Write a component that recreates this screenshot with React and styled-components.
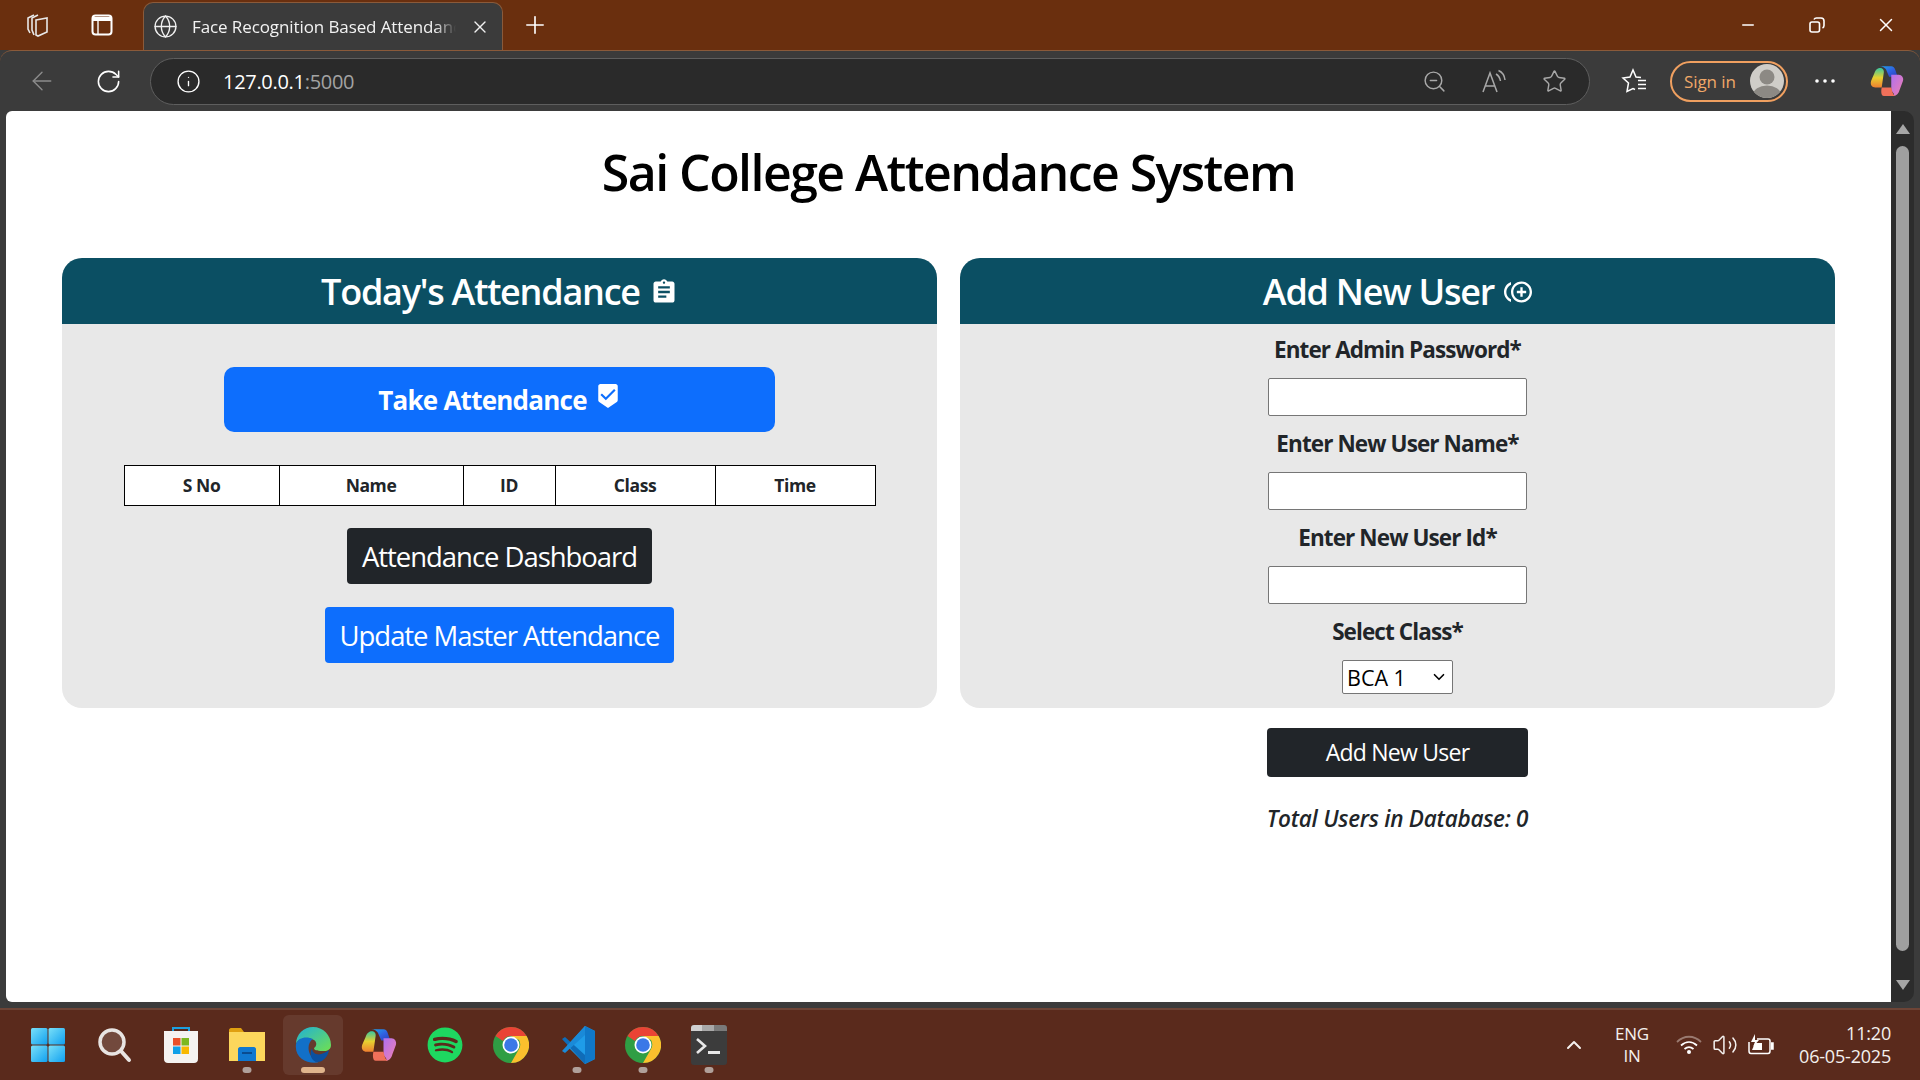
import styled, { createGlobalStyle } from 'styled-components';
import { MdAssignment, MdBeenhere, MdControlPointDuplicate } from 'react-icons/md';
import { FaSpotify } from 'react-icons/fa';
import {
  ArrowLeft, RotateCw, Info, ZoomOut, Star, Globe, X, Plus, Minus, ChevronUp, ChevronDown, Volume2,
} from 'lucide-react';

const GlobalStyle = createGlobalStyle`
  html, body { margin: 0; padding: 0; height: 100%; overflow: hidden; }
  body { font-family: "Open Sans", "Noto Sans", sans-serif; }
  * { box-sizing: border-box; }
`;

const Screen = styled.div`
  width: 1920px;
  height: 1080px;
  display: flex;
  flex-direction: column;
  background: #3b3b3b;
`;

/* browser chrome */
const TabStrip = styled.div`
  height: 50px;
  flex: none;
  background: #6a2f0e;
  display: flex;
  align-items: flex-end;
  color: #fff;
`;
const StripIcon = styled.div`
  width: 64px;
  height: 50px;
  display: flex;
  align-items: center;
  justify-content: center;
  flex: none;
  margin-left: ${(p) => p.$ml || 0}px;
`;
const Tab = styled.div`
  width: 360px;
  height: 48px;
  margin-left: 9px;
  background: #3b3b3b;
  border: 1px solid #8a5a3a;
  border-bottom: none;
  border-radius: 10px 10px 0 0;
  display: flex;
  align-items: center;
  padding: 0 12px 0 9px;
  gap: 14px;
  flex: none;
`;
const TabTitle = styled.span`
  flex: 1;
  font-family: "Open Sans", sans-serif;
  font-size: 17px;
  letter-spacing: -0.1px;
  white-space: nowrap;
  overflow: hidden;
  color: #f2f2f2;
  mask-image: linear-gradient(to right, #000 92%, transparent 100%);
`;
const StripSpacer = styled.div`
  flex: 1;
`;
const WindowButton = styled.div`
  width: 69px;
  height: 50px;
  display: flex;
  align-items: center;
  justify-content: center;
  flex: none;
`;
const Toolbar = styled.div`
  height: 61px;
  flex: none;
  background: #3b3b3b;
  border-top: 1px solid #8a5a3a;
  border-radius: 12px 12px 0 0;
  display: flex;
  align-items: center;
  padding-left: 18px;
  color: #fff;
`;
const NavButton = styled.div`
  width: ${(p) => p.$w || 48}px;
  height: 46px;
  display: flex;
  align-items: center;
  justify-content: center;
  flex: none;
  margin-left: ${(p) => p.$ml || 0}px;
`;
const AddressBar = styled.div`
  width: 1440px;
  height: 47px;
  margin-left: 18px;
  flex: none;
  background: #2a2a2a;
  border: 1px solid #5e5e5e;
  border-radius: 24px;
  display: flex;
  align-items: center;
  padding: 0 5px 0 25px;
`;
const Url = styled.div`
  flex: 1;
  margin-left: 22px;
  font-family: "Open Sans", sans-serif;
  font-size: 20px;
  letter-spacing: -0.3px;
  color: #fff;
  span { color: #a3a3a3; }
`;
const AddressIcon = styled.div`
  width: 60px;
  display: flex;
  justify-content: center;
  color: #a8a8a8;
`;
const SignIn = styled.div`
  width: 118px;
  height: 41px;
  margin-left: 14px;
  border: 2px solid #f0a060;
  border-radius: 21px;
  display: flex;
  align-items: center;
  justify-content: space-between;
  padding: 0 2px 0 12px;
  color: #f0a868;
  font-family: "Open Sans", sans-serif;
  font-size: 17px;
  letter-spacing: -0.1px;
  flex: none;
`;
const Avatar = styled.div`
  width: 34px;
  height: 34px;
  border-radius: 50%;
  overflow: hidden;
  flex: none;
`;

/* page area */
const Viewport = styled.div`
  flex: 1;
  min-height: 0;
  display: flex;
  padding: 0 0 6px 6px;
  background: #3b3b3b;
`;
const Page = styled.main`
  flex: 1;
  min-width: 0;
  background: #fff;
  border-radius: 6px 0 0 6px;
  font-family: "Open Sans", "Noto Sans", sans-serif;
  color: #212529;
`;
const Scrollbar = styled.div`
  width: 23px;
  flex: none;
  background: #2c2c2c;
  border-radius: 0 10px 10px 0;
  margin-right: 6px;
  display: flex;
  flex-direction: column;
  align-items: center;
  padding: 6px 0 5px;
`;
const ScrollArrow = styled.div`
  height: 24px;
  flex: none;
  display: flex;
  align-items: center;
  color: #a6a6a6;
`;
const ScrollThumb = styled.div`
  flex: 1;
  width: 13px;
  margin: 5px 0 22px;
  background: #9f9f9f;
  border-radius: 7px;
`;
const Title = styled.h1`
  margin: 0;
  padding-top: 31px;
  height: 147px;
  text-align: center;
  font-size: 50px;
  font-weight: 600;
  line-height: 1.2;
  letter-spacing: -1.55px;
  color: #000;
`;
const Columns = styled.div`
  display: flex;
  gap: 23px;
  padding: 0 56px;
  align-items: flex-start;
`;
const Column = styled.section`
  width: 875px;
  flex: none;
  display: flex;
  flex-direction: column;
  align-items: center;
`;
const Panel = styled.div`
  width: 100%;
  height: 450px;
  background: #e8e8e8;
  border-radius: 20px;
  overflow: hidden;
  display: flex;
  flex-direction: column;
  align-items: center;
`;
const PanelHead = styled.h2`
  width: 100%;
  height: 66px;
  flex: none;
  margin: 0;
  background: #0b4f63;
  color: #fff;
  font-size: 36px;
  font-weight: 600;
  letter-spacing: -1.25px;
  line-height: 68px;
  text-align: center;
  svg { vertical-align: -1px; margin-left: 2px; }
`;
const TakeButton = styled.button`
  width: 551px;
  height: 65px;
  margin-top: 43px;
  border: none;
  border-radius: 10px;
  background: #0d6efd;
  color: #fff;
  font-family: inherit;
  font-size: 26px;
  font-weight: 700;
  letter-spacing: -0.75px;
  svg { vertical-align: 1px; margin-left: 2px; }
`;
const AttendanceTable = styled.table`
  width: 751px;
  height: 41px;
  margin-top: 33px;
  border-collapse: collapse;
  background: #fff;
  table-layout: fixed;
  border: 1.5px solid #000;
  th {
    border: 1px solid #000;
    padding: 0 0 2px;
    font-size: 17.5px;
    font-weight: 700;
    letter-spacing: -0.4px;
    color: #212529;
  }
`;
const PlainButton = styled.button`
  height: 56px;
  padding: 0 ${(p) => p.$pad}px;
  margin-top: ${(p) => p.$top}px;
  border: none;
  border-radius: 4px;
  background: ${(p) => p.$bg};
  color: #fff;
  font-family: inherit;
  font-size: 27.5px;
  font-weight: 400;
  letter-spacing: -1.05px;
  white-space: nowrap;
`;
const FieldLabel = styled.label`
  display: block;
  height: 26px;
  margin-top: ${(p) => p.$top}px;
  font-size: 22.5px;
  font-weight: 700;
  line-height: 26px;
  letter-spacing: -0.9px;
  color: #212529;
`;
const TextInput = styled.input`
  width: 259px;
  height: 38px;
  margin-top: 15px;
  border: 1px solid #767676;
  border-radius: 2px;
  background: #fff;
  display: block;
`;
const SelectWrap = styled.div`
  position: relative;
  width: 111px;
  height: 34px;
  margin-top: 15px;
  svg {
    position: absolute;
    right: 5px;
    top: 8px;
    pointer-events: none;
    color: #000;
  }
`;
const ClassSelect = styled.select`
  appearance: none;
  width: 100%;
  height: 100%;
  padding: 0 0 0 4px;
  border: 1px solid #767676;
  border-radius: 2px;
  background: #fff;
  font-family: "Open Sans", sans-serif;
  font-size: 21.5px;
  letter-spacing: 0;
  color: #000;
`;
const AddButton = styled.button`
  width: 261px;
  height: 49px;
  margin-top: 20px;
  padding-bottom: 2px;
  border: none;
  border-radius: 4px;
  background: #212529;
  color: #fff;
  font-family: inherit;
  font-size: 23px;
  letter-spacing: -0.75px;
`;
const TotalUsers = styled.p`
  margin: 26px 0 0;
  font-size: 22.5px;
  font-style: italic;
  font-weight: 600;
  line-height: 32px;
  letter-spacing: -0.25px;
  color: #212529;
`;

/* taskbar */
const Taskbar = styled.footer`
  height: 72px;
  flex: none;
  background: #5a2a1c;
  border-top: 2px solid #6e4436;
  display: flex;
  align-items: center;
  padding-left: 15px;
  color: #fff;
`;
const TaskItem = styled.div`
  position: relative;
  width: 66px;
  height: 60px;
  flex: none;
  display: flex;
  align-items: center;
  justify-content: center;
  border-radius: 6px;
  ${(p) => p.$active && 'background: rgba(255,255,255,0.08); width: 60px; margin: 0 3px;'}
  ${(p) => p.$first && 'margin-right: 1px;'}
`;
const RunDot = styled.span`
  position: absolute;
  left: 50%;
  bottom: 2px;
  width: ${(p) => (p.$active ? 24 : 9)}px;
  height: 6px;
  transform: translateX(-50%);
  border-radius: 3px;
  background: ${(p) => (p.$active ? '#e0b48c' : '#b0a09a')};
`;
const Tray = styled.div`
  margin-left: auto;
  display: flex;
  align-items: center;
  padding-right: 29px;
  font-family: "Open Sans", sans-serif;
  font-size: 17px;
  letter-spacing: -0.2px;
  color: #f4f0ee;
`;
const Lang = styled.div`
  width: 60px;
  margin-left: 16px;
  text-align: center;
  line-height: 22px;
`;
const TrayIcon = styled.div`
  width: 36px;
  display: flex;
  justify-content: center;
  margin-left: ${(p) => p.$ml || 0}px;
`;
const Clock = styled.div`
  width: 112px;
  text-align: right;
  font-size: 18px;
  line-height: 23px;
`;

/* logos and icons that the packages don't have */
const CollectionsIcon = () => (
  <svg width="26" height="26" viewBox="0 0 26 26" fill="none" stroke="#e8e8e8" strokeWidth="1.6">
    <path d="M9 3 L3 6 V17 L5 21" />
    <path d="M13 3 L7 6 V18 L9 23" />
    <path d="M11 8 L22 6 V20 L13 24 L11 23 Z" />
  </svg>
);
const TabsIcon = () => (
  <svg width="22" height="22" viewBox="0 0 22 22" fill="none" stroke="#fff" strokeWidth="2">
    <rect x="1.5" y="1.5" width="19" height="19" rx="3" />
    <path d="M2 3 H20 V7 H2 Z" fill="#fff" stroke="none" />
    <path d="M7 7 V20" strokeWidth="1.4" />
  </svg>
);
const RestoreIcon = () => (
  <svg width="16" height="16" viewBox="0 0 16 16" fill="none" stroke="#fff" strokeWidth="1.6">
    <rect x="1" y="5" width="9.5" height="10" rx="2" />
    <path d="M5 2.5 C5.5 1.4 6.5 1 7.5 1 H12 C13.8 1 15 2.2 15 4 V8.5 C15 9.6 14.5 10.5 13.5 11" />
  </svg>
);
const ReadAloudIcon = () => (
  <svg width="26" height="24" viewBox="0 0 26 24" fill="none" stroke="#a8a8a8" strokeWidth="1.5">
    <path d="M2 23 L9 4 L16 23 M4.5 17 H13.5" />
    <path d="M15 5 C17.5 6.5 19 9 19.5 12" />
    <path d="M17.5 1.5 C21 3 23.5 6.5 24 11" />
  </svg>
);
const FavoritesIcon = () => (
  <svg width="26" height="26" viewBox="0 0 26 26" fill="none" stroke="#fff" strokeWidth="1.5">
    <path d="M20 9.5 L15 9 L12 2 L9 9 L2 10 L7.5 15 L6 23.5 L12 20.5 L14 21.5" />
    <path d="M17 12.5 H25 M17 16.5 H25 M17 20.5 H25" />
  </svg>
);
const AvatarIcon = () => (
  <svg width="34" height="34" viewBox="0 0 34 34">
    <rect width="34" height="34" fill="#cfcdc8" />
    <circle cx="17" cy="13" r="7.5" fill="#8c8984" />
    <ellipse cx="17" cy="31" rx="14" ry="9.5" fill="#8c8984" />
  </svg>
);
const CopilotIcon = ({ size = 34, id }) => (
  <svg width={size} height={size} viewBox="0 0 32 32">
    <defs>
      <linearGradient id={`${id}a`} x1="0" y1="0" x2="1" y2="1">
        <stop offset="0" stopColor="#1fa8f0" />
        <stop offset="0.55" stopColor="#2f5fe0" />
        <stop offset="1" stopColor="#2a3fb8" />
      </linearGradient>
      <linearGradient id={`${id}b`} x1="0" y1="0" x2="0" y2="1">
        <stop offset="0" stopColor="#38c8a0" />
        <stop offset="0.5" stopColor="#e8d030" />
        <stop offset="1" stopColor="#f08030" />
      </linearGradient>
      <linearGradient id={`${id}c`} x1="0" y1="0" x2="1" y2="1">
        <stop offset="0" stopColor="#b070f0" />
        <stop offset="1" stopColor="#f080b0" />
      </linearGradient>
    </defs>
    <path d="M9 2 H20 C22 2 23 3 24 6 L26 12 H18 L15 5 C14 3.5 12 2 9 2 Z" fill={`url(#${id}a)`} />
    <path d="M8 4 C11 3 13.5 5 13 8 L11 22 H5 C2 22 0 20 1 16 L4 9 C5 6 6 5 8 4 Z" fill={`url(#${id}b)`} />
    <path d="M20 10 H27 C30 10 32 13 31 16 L28 24 C27 28 25 30 22 30 C24 28 20.5 27 20 24 Z" fill={`url(#${id}c)`} />
    <path d="M11 22 H20 L21 26 C21.5 28 23 30 24 30 H13 C11 30 10 27 11 22 Z" fill="#f0705a" />
  </svg>
);
const WindowsLogo = () => (
  <svg width="36" height="36" viewBox="0 0 36 36">
    <defs>
      <linearGradient id="win" x1="0" y1="0" x2="1" y2="1">
        <stop offset="0" stopColor="#7ae0f8" />
        <stop offset="1" stopColor="#10a0f0" />
      </linearGradient>
    </defs>
    <rect x="1" y="1" width="16.5" height="16.5" rx="1.5" fill="url(#win)" />
    <rect x="18.5" y="1" width="16.5" height="16.5" rx="1.5" fill="url(#win)" />
    <rect x="1" y="18.5" width="16.5" height="16.5" rx="1.5" fill="url(#win)" />
    <rect x="18.5" y="18.5" width="16.5" height="16.5" rx="1.5" fill="url(#win)" />
  </svg>
);
const SearchLogo = () => (
  <svg width="36" height="36" viewBox="0 0 36 36" fill="none">
    <circle cx="15" cy="15" r="12" fill="rgba(255,255,255,0.15)" stroke="#e8e4e2" strokeWidth="3.5" />
    <path d="M24 24 L32 33" stroke="#e8e4e2" strokeWidth="4" strokeLinecap="round" />
  </svg>
);
const StoreLogo = () => (
  <svg width="36" height="38" viewBox="0 0 36 38">
    <path d="M10 6 V2 H26 V6" fill="none" stroke="#1ba0e0" strokeWidth="2" />
    <path d="M1 5 H35 V33 C35 35.5 33.5 37 31 37 H5 C2.5 37 1 35.5 1 33 Z" fill="#f5f3f1" />
    <rect x="10" y="12" width="7.5" height="7.5" fill="#e8502a" />
    <rect x="18.5" y="12" width="7.5" height="7.5" fill="#7cb820" />
    <rect x="10" y="20.5" width="7.5" height="7.5" fill="#10a0e8" />
    <rect x="18.5" y="20.5" width="7.5" height="7.5" fill="#f8b800" />
  </svg>
);
const FolderLogo = () => (
  <svg width="36" height="34" viewBox="0 0 36 34">
    <path d="M0 2 C0 1 1 0 2 0 H12 L15 4 H0 Z" fill="#e0a010" />
    <path d="M0 4 H36 V33 H0 Z" fill="#fcd75c" />
    <path d="M9 21 C9 20 10 19 11 19 H25 C26 19 27 20 27 21 V33 H9 Z" fill="#1078d0" />
    <rect x="13" y="24" width="10" height="2" fill="#0a4c90" />
  </svg>
);
const EdgeLogo = () => (
  <svg width="36" height="36" viewBox="0 0 36 36">
    <defs>
      <linearGradient id="edgeTop" x1="0" y1="0" x2="1" y2="1">
        <stop offset="0" stopColor="#1fb0d8" />
        <stop offset="1" stopColor="#70e050" />
      </linearGradient>
    </defs>
    <path d="M1 17 C1 7 9 0 18 0 C28 0 36 8 36 18 C36 22 33 24 29 24 C24 24 19 24 19 21 C22 19 22 15 19 13 C13 9 3 11 1 17 Z" fill="url(#edgeTop)" />
    <path d="M1 17 C3 10 12 9 18 12 C13 15 12 23 16 29 C18 33 22 36 25 35 C14 38 -1 32 1 17 Z" fill="#1270c8" />
    <path d="M17 21 C17 27 23 29 29 26 C31 25 33 24 34 23 C33 30 27 36 21 35 C16 33 14 26 17 21 Z" fill="#0b50a0" />
  </svg>
);
const ChromeLogo = () => (
  <svg width="36" height="36" viewBox="0 0 36 36">
    <circle cx="18" cy="18" r="18" fill="#2f9e44" />
    <path d="M18 0 A18 18 0 0 1 33.6 9 L18 9 A9 9 0 0 0 10 14 L2.5 9 A18 18 0 0 1 18 0 Z" fill="#ea4335" />
    <path d="M33.6 9 A18 18 0 0 1 18 36 L26 22 A9 9 0 0 0 26 13 L18 9 Z" fill="#fbc02d" />
    <circle cx="18" cy="18" r="8.5" fill="#fff" />
    <circle cx="18" cy="18" r="6.8" fill="#3b78e7" />
  </svg>
);
const VsCodeLogo = () => (
  <svg width="36" height="38" viewBox="0 0 36 38">
    <path d="M26 0 L36 5 V33 L26 38 L8 20 Z" fill="#1f9ce8" />
    <path d="M26 0 V38 L36 33 V5 Z" fill="#1078c8" />
    <path d="M3 13 L6 11 L26 29 V38 Z" fill="#0f6cb8" />
    <path d="M3 25 L6 27 L26 9 V0 Z" fill="#1a8ad8" />
  </svg>
);
const TerminalLogo = () => (
  <svg width="36" height="40" viewBox="0 0 36 40" fill="none">
    <rect x="0" y="0" width="36" height="40" rx="3" fill="#3c3c3c" />
    <path d="M0 3 C0 1 1 0 3 0 H11 V6 H0 Z" fill="#d0d0d0" />
    <rect x="11" y="0" width="12" height="6" fill="#a8a8a8" />
    <path d="M23 0 H33 C35 0 36 1 36 3 V6 H23 Z" fill="#7a7a7a" />
    <path d="M6 14 L14 21 L6 28" stroke="#e8e8e8" strokeWidth="2.6" />
    <rect x="17" y="26" width="12" height="3" fill="#e8e8e8" />
  </svg>
);
const WifiIcon = () => (
  <svg width="26" height="20" viewBox="0 0 26 20" fill="none" strokeWidth="1.8">
    <path d="M1 7 C8 0 18 0 25 7" stroke="#9a7a70" />
    <path d="M5 10.5 C10 6 16 6 21 10.5" stroke="#fff" />
    <path d="M8.5 14 C11.5 11.5 14.5 11.5 17.5 14" stroke="#fff" />
    <circle cx="13" cy="17" r="2" fill="#fff" stroke="none" />
  </svg>
);
const BatteryIcon = () => (
  <svg width="26" height="22" viewBox="0 0 26 22" fill="none" stroke="#fff" strokeWidth="1.5">
    <path d="M9 5 H20 C21.5 5 22 6 22 7 V17 C22 18.5 21.5 19.5 20 19.5 H3 C2 19.5 1 18.5 1 17 V8" />
    <path d="M23 9 H25 V15 H23" fill="#fff" />
    <path d="M7 9 H14 V16 H4 Z" fill="#fff" stroke="none" />
    <path d="M7 0 L3 8 H7 L5 13 L11 6 H7 Z" fill="#fff" stroke="none" />
  </svg>
);

const tableCols = [
  { label: 'S No', width: 155 },
  { label: 'Name', width: 184 },
  { label: 'ID', width: 92 },
  { label: 'Class', width: 160 },
  { label: 'Time', width: 160 },
];

const fields = [
  { label: 'Enter Admin Password*', top: 13 },
  { label: 'Enter New User Name*', top: 15 },
  { label: 'Enter New User Id*', top: 15 },
];

const taskItems = [
  { key: 'start', icon: <WindowsLogo />, first: true },
  { key: 'search', icon: <SearchLogo /> },
  { key: 'store', icon: <StoreLogo /> },
  { key: 'files', icon: <FolderLogo />, running: true },
  { key: 'edge', icon: <EdgeLogo />, active: true },
  { key: 'copilot', icon: <CopilotIcon size={36} id="cpb" /> },
  { key: 'spotify', icon: <FaSpotify size={36} color="#1ed760" /> },
  { key: 'chrome', icon: <ChromeLogo /> },
  { key: 'code', icon: <VsCodeLogo />, running: true },
  { key: 'chrome2', icon: <ChromeLogo />, running: true },
  { key: 'terminal', icon: <TerminalLogo />, running: true },
];

export default function App() {
  return (
    <Screen>
      <GlobalStyle />
      <TabStrip>
        <StripIcon $ml={6}><CollectionsIcon /></StripIcon>
        <StripIcon><TabsIcon /></StripIcon>
        <Tab>
          <Globe size={25} strokeWidth={1.3} color="#f0f0f0" />
          <TabTitle>Face Recognition Based Attendance System</TabTitle>
          <X size={20} strokeWidth={1.6} color="#f0f0f0" />
        </Tab>
        <StripIcon><Plus size={28} strokeWidth={1.4} /></StripIcon>
        <StripSpacer />
        <WindowButton><Minus size={18} strokeWidth={2} /></WindowButton>
        <WindowButton><RestoreIcon /></WindowButton>
        <WindowButton><X size={22} strokeWidth={1.6} /></WindowButton>
      </TabStrip>
      <Toolbar>
        <NavButton><ArrowLeft size={30} strokeWidth={1.1} color="#8c8c8c" /></NavButton>
        <NavButton $ml={18}><RotateCw size={27} strokeWidth={1.4} /></NavButton>
        <AddressBar>
          <Info size={25} strokeWidth={1.3} />
          <Url>127.0.0.1<span>:5000</span></Url>
          <AddressIcon><ZoomOut size={25} strokeWidth={1.4} /></AddressIcon>
          <AddressIcon><ReadAloudIcon /></AddressIcon>
          <AddressIcon><Star size={25} strokeWidth={1.4} /></AddressIcon>
        </AddressBar>
        <NavButton $w={44} $ml={22}><FavoritesIcon /></NavButton>
        <SignIn>Sign in<Avatar><AvatarIcon /></Avatar></SignIn>
        <NavButton $w={50} $ml={12}>
          <svg width="20" height="4" viewBox="0 0 20 4" fill="#fff">
            <circle cx="2" cy="2" r="1.8" /><circle cx="10" cy="2" r="1.8" /><circle cx="18" cy="2" r="1.8" />
          </svg>
        </NavButton>
        <NavButton $w={36} $ml={19}><CopilotIcon id="cpa" /></NavButton>
      </Toolbar>

      <Viewport>
        <Page>
          <Title>Sai College Attendance System</Title>
          <Columns>
            <Column>
              <Panel>
                <PanelHead>Today's Attendance <MdAssignment size={28} /></PanelHead>
                <TakeButton>Take Attendance <MdBeenhere size={26} /></TakeButton>
                <AttendanceTable>
                  <colgroup>
                    {tableCols.map((c) => <col key={c.label} style={{ width: c.width }} />)}
                  </colgroup>
                  <thead>
                    <tr>{tableCols.map((c) => <th key={c.label}>{c.label}</th>)}</tr>
                  </thead>
                </AttendanceTable>
                <PlainButton $bg="#212529" $pad={15} $top={22}>Attendance Dashboard</PlainButton>
                <PlainButton $bg="#0d6efd" $pad={15} $top={23}>Update Master Attendance</PlainButton>
              </Panel>
            </Column>
            <Column>
              <Panel>
                <PanelHead>Add New User <MdControlPointDuplicate size={28} /></PanelHead>
                {fields.map((f) => (
                  <div key={f.label} style={{ display: 'contents' }}>
                    <FieldLabel $top={f.top}>{f.label}</FieldLabel>
                    <TextInput type="text" />
                  </div>
                ))}
                <FieldLabel $top={15}>Select Class*</FieldLabel>
                <SelectWrap>
                  <ClassSelect defaultValue="BCA 1"><option>BCA 1</option></ClassSelect>
                  <ChevronDown size={18} strokeWidth={2.2} />
                </SelectWrap>
              </Panel>
              <AddButton>Add New User</AddButton>
              <TotalUsers>Total Users in Database: 0</TotalUsers>
            </Column>
          </Columns>
        </Page>
        <Scrollbar>
          <ScrollArrow><svg width="16" height="12" viewBox="0 0 16 12" fill="currentColor"><path d="M8 1 L15 11 H1 Z" /></svg></ScrollArrow>
          <ScrollThumb />
          <ScrollArrow><svg width="16" height="12" viewBox="0 0 16 12" fill="currentColor"><path d="M8 11 L15 1 H1 Z" /></svg></ScrollArrow>
        </Scrollbar>
      </Viewport>

      <Taskbar>
        {taskItems.map((t) => (
          <TaskItem key={t.key} $active={t.active} $first={t.first}>
            {t.icon}
            {t.running && <RunDot />}
            {t.active && <RunDot $active />}
          </TaskItem>
        ))}
        <Tray>
          <ChevronUp size={24} strokeWidth={2} />
          <Lang>ENG<br />IN</Lang>
          <TrayIcon $ml={9}><WifiIcon /></TrayIcon>
          <TrayIcon><Volume2 size={26} strokeWidth={1.4} /></TrayIcon>
          <TrayIcon><BatteryIcon /></TrayIcon>
          <Clock>11:20<br />06-05-2025</Clock>
        </Tray>
      </Taskbar>
    </Screen>
  );
}
